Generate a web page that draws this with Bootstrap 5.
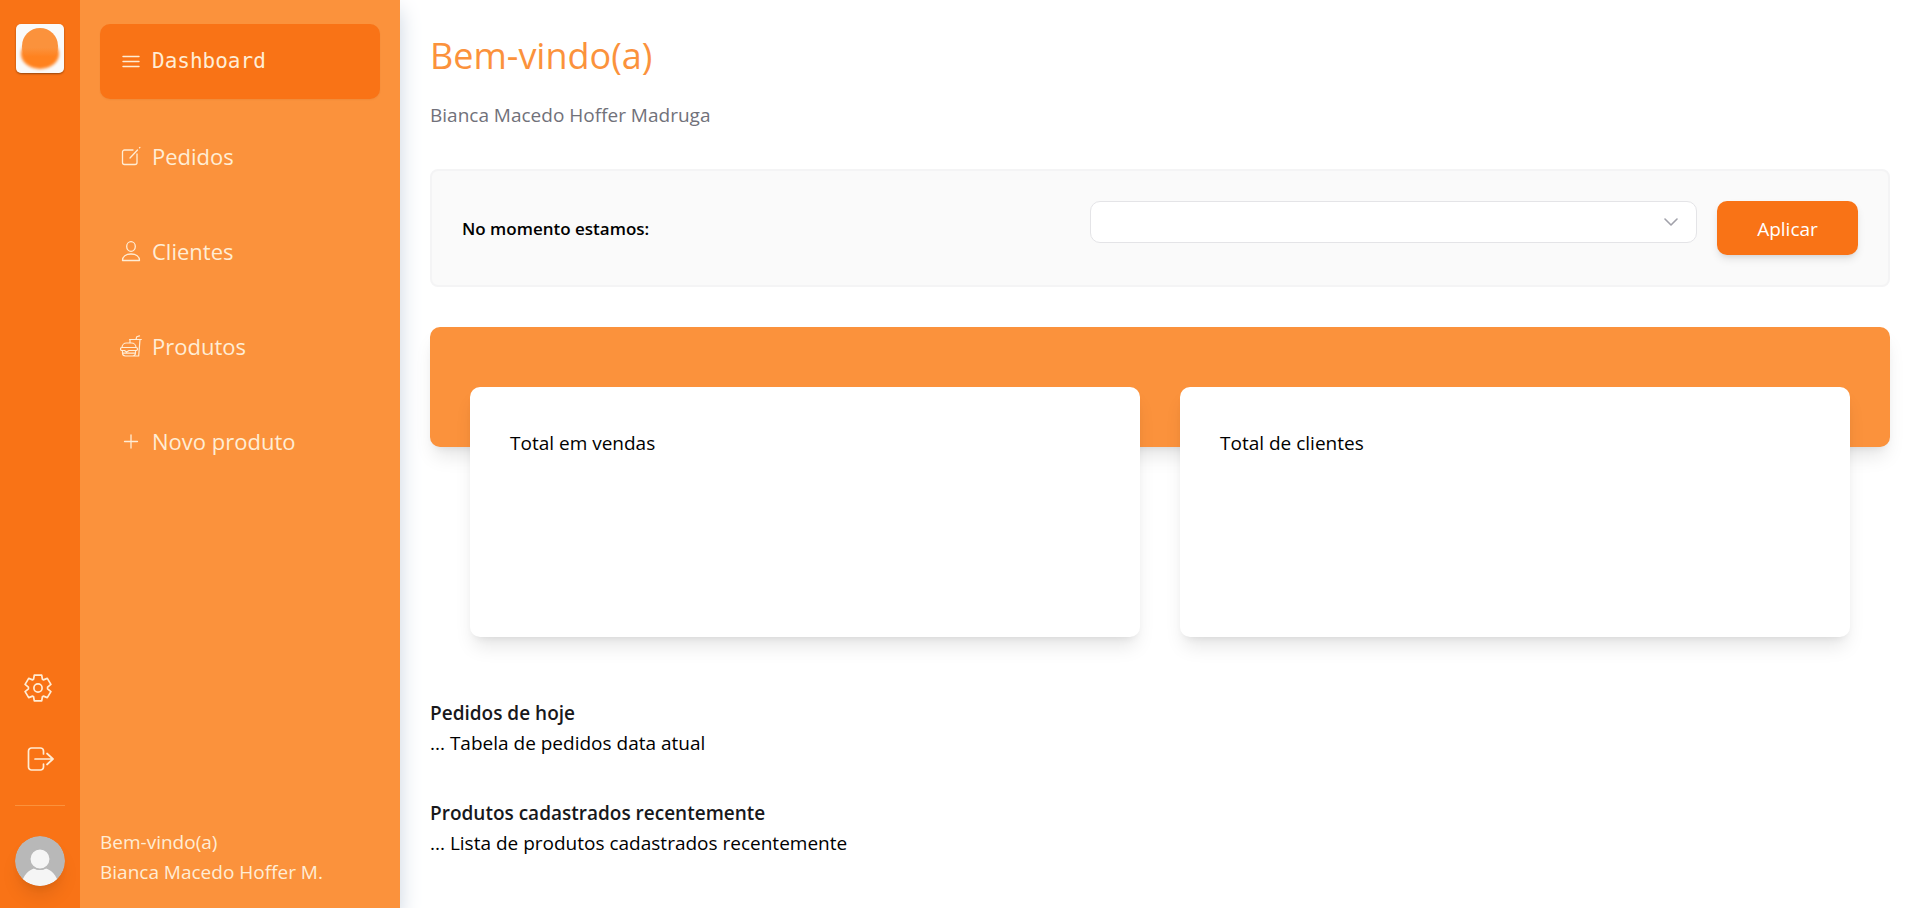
<!DOCTYPE html>
<html lang="pt-BR">
<head>
<meta charset="utf-8">
<meta name="viewport" content="width=device-width, initial-scale=1">
<title>Dashboard</title>
<link href="https://cdn.jsdelivr.net/npm/bootstrap@5.3.0/dist/css/bootstrap.min.css" rel="stylesheet">
<style>
  :root { --brand: #f97316; --brand-soft: #fb923c; --cream: #ffedd5; --shadow-lg: 0 13px 19px -4px rgba(0,0,0,.1), 0 5px 8px -5px rgba(0,0,0,.1); }
  body { font-family: "Open Sans", "Noto Sans", sans-serif; font-size: 19px; line-height: 30px; color: #000; }
  svg { display: block; }
  .line-icon { fill: none; stroke: currentColor; stroke-linecap: round; stroke-linejoin: round; }
  .side-area { box-shadow: 0 10px 20px 0 #cbd5e1; }
  .rail { width: 80px; padding: 24px 15px 22px; background: var(--brand); color: var(--cream); }
  .rail a, .menu a { color: var(--cream); }
  .logo { width: 48px; border-radius: 5px; box-shadow: 0 1px 2px rgba(0,0,0,.4); overflow: hidden; }
  .rail-tools { gap: 43px; }
  .rail-rule { width: 50px; height: 1px; margin: 32px 0 30px; border: 0; opacity: 1; background: var(--brand-soft); }
  .avatar { width: 50px; height: 50px; border-radius: 50%; box-shadow: var(--shadow-lg); }
  .menu { width: 320px; padding: 24px 20px 21px; background: var(--brand-soft); color: var(--cream); }
  .menu .nav { gap: 20px; }
  .menu .nav-link { display: flex; align-items: center; gap: 10px; height: 75px; padding: 0 20px 2px; font-size: 22px; border-radius: 10px; }
  .menu .nav-link.active { background: var(--brand); font-family: "DejaVu Sans Mono", monospace; font-size: 21px; box-shadow: 0 1px 2px rgba(0,0,0,.05); }
  main { padding: 26px 30px; min-width: 0; }
  h1 { font-size: 36px; line-height: 60px; font-weight: 400; color: var(--brand-soft); margin-bottom: 14px; }
  .user-name { color: #71717a; margin-bottom: 39px; }
  .status-box { padding: 30px; border: 2px solid #f4f4f5; border-radius: 8px; background: #fafafa; gap: 20px; margin-bottom: 40px; }
  .status-box .row { --bs-gutter-x: 20px; }
  .status-box label { font-size: 17px; font-weight: 600; line-height: 56px; margin-bottom: -2px; }
  .status-box .form-select { height: 42px; border: 1px solid #e4e4e7; border-radius: 10px; background-position: right 18px center; background-size: 14px 14px;
    background-image: url("data:image/svg+xml,%3csvg xmlns='http://www.w3.org/2000/svg' viewBox='0 0 14 14'%3e%3cpath fill='none' stroke='%23a1a1aa' stroke-width='1.6' stroke-linecap='round' stroke-linejoin='round' d='M1 4l6 6 6-6'/%3e%3c/svg%3e"); }
  .btn-apply { width: 141px; height: 54px; padding: 2px 0 0; border: 0; border-radius: 10px; background: var(--brand); color: #fff; font-size: 19px; box-shadow: 0 5px 8px -1px rgba(0,0,0,.1), 0 3px 5px -3px rgba(0,0,0,.1); }
  .btn-apply:hover { background: #ea580c; color: #fff; }
  .banner { height: 120px; border-radius: 10px; background: var(--brand-soft); box-shadow: var(--shadow-lg); }
  .totals { margin: -60px 40px 61px; gap: 40px; position: relative; }
  .total-card { min-height: 250px; padding: 40px; border-radius: 10px; background: #fff; box-shadow: var(--shadow-lg); }
  .total-card h2 { font-size: 19px; line-height: 32px; font-weight: 400; margin: 0; }
  .list-block + .list-block { margin-top: 40px; }
  .list-block h2 { font-size: 19px; line-height: 30px; font-weight: 600; color: #18181b; margin: 0; }
</style>
</head>
<body>
<div class="d-flex min-vh-100">
  <div class="side-area d-flex flex-shrink-0">
    <div class="rail d-flex flex-column align-items-center justify-content-between">
      <a href="#" class="logo" aria-label="Início">
        <svg width="48" height="49" viewBox="0 0 48 49">
          <defs>
            <filter id="soft" x="-20%" y="-20%" width="140%" height="140%" color-interpolation-filters="sRGB"><feGaussianBlur stdDeviation="1.5"/></filter>
            <linearGradient id="fade" x1="0" y1="0" x2="0" y2="1"><stop offset=".55" stop-color="#fb923c"/><stop offset=".8" stop-color="#ff821f"/></linearGradient>
          </defs>
          <rect width="48" height="49" fill="#fafafa"/>
          <ellipse cx="24" cy="30" rx="19" ry="15" fill="#ff821f" filter="url(#soft)"/>
          <circle cx="24" cy="22" r="18" fill="url(#fade)"/>
        </svg>
      </a>
      <div class="d-flex flex-column align-items-center">
        <div class="rail-tools d-flex flex-column align-items-center">
          <a href="#" aria-label="Configurações" class="me-1">
            <svg class="line-icon" width="28" height="28" viewBox="-14 -14 28 28" stroke-width="1.7"><path d="M-3.7-12.9H3.7L4.4-8.8 5.4-8.1 9.3-9.6 12.9-3.6 9.6-.9V.9L12.9 3.6 9.3 9.6 5.4 8.1 4.4 8.8 3.7 12.9H-3.7L-4.4 8.8-5.4 8.1-9.3 9.6-12.9 3.6-9.6.9V-.9L-12.9-3.6-9.3-9.6-5.4-8.1-4.4-8.8Z"/><circle r="4.1"/></svg>
          </a>
          <a href="#" aria-label="Sair">
            <svg class="line-icon" width="28" height="28" viewBox="0 0 28 28" stroke-width="1.7"><path d="M17.500 9V6a3 3 0 0 0-3-3h-9a3 3 0 0 0-3 3v16a3 3 0 0 0 3 3h9a3 3 0 0 0 3-3v-3M9 14h18M21 8.500l6 5.500-6 5.500"/></svg>
          </a>
        </div>
        <hr class="rail-rule">
        <svg class="avatar" viewBox="0 0 50 50" role="img" aria-label="Bianca Macedo Hoffer M.">
          <defs><clipPath id="round"><circle cx="25" cy="25" r="25"/></clipPath></defs>
          <g clip-path="url(#round)"><rect width="50" height="50" fill="#b8b8b8"/><path d="M5 50C9 38 14 34 19 32.500q6 3 12 0C36 34 41 38 45 50Z" fill="#f5f5f5"/><circle cx="25" cy="23" r="10.200" fill="#f5f5f5" stroke="#b8b8b8" stroke-width="1.500"/></g>
        </svg>
      </div>
    </div>
    <div class="menu d-flex flex-column justify-content-between">
      <nav class="nav flex-column" aria-label="Principal">
        <a class="nav-link active" href="#" aria-current="page">
          <svg class="line-icon" width="22" height="22" viewBox="0 0 22 22" stroke-width="1.4"><path d="M3 6.500h16M3 11.500h16M3 16.500h16"/></svg>Dashboard</a>
        <a class="nav-link" href="#">
          <svg class="line-icon" width="22" height="22" viewBox="0 0 22 22" stroke-width="1.3"><path d="M13 5H4.500a2 2 0 0 0-2 2v10.500a2 2 0 0 0 2 2H15a2 2 0 0 0 2-2V9M10 13l7.500-8M19.500 2.800l.4-.4"/></svg>Pedidos</a>
        <a class="nav-link" href="#">
          <svg class="line-icon" width="22" height="22" viewBox="0 0 22 22" stroke-width="1.3"><ellipse cx="11" cy="6.500" rx="4.300" ry="4.800"/><path d="M2.500 20.500C2.500 16.500 6 14 11 14s8.500 2.500 8.500 6.500Z"/></svg>Clientes</a>
        <a class="nav-link" href="#">
          <svg class="line-icon" width="22" height="22" viewBox="0 0 22 22" stroke-width="1.2"><path d="M2 12.500a4.500 4.500 0 0 1 4.500-4.500h5a4.500 4.500 0 0 1 4.500 4.500ZM2 12.500a1.500 1.500 0 0 0 0 3l2.500 0 2 1.500 2.500-1.500h7a1.500 1.500 0 0 0 0-3M2.500 18.200h13M2.500 15.500v2.500a3 3 0 0 0 3 3h7a3 3 0 0 0 3-3v-2.500M9.500 4.500h11.800M20 4.500l-1.300 16.500H13M10 4.500v3M16 4.500l.7-2.700L19.500.9"/></svg>Produtos</a>
        <a class="nav-link" href="#">
          <svg class="line-icon" width="22" height="22" viewBox="0 0 22 22" stroke-width="1.3"><path d="M4.500 11.500h13M11 5v13"/></svg>Novo produto</a>
      </nav>
      <div>Bem-vindo(a)<br>Bianca Macedo Hoffer M.</div>
    </div>
  </div>
  <main class="flex-grow-1">
    <h1>Bem-vindo(a)</h1>
    <p class="user-name">Bianca Macedo Hoffer Madruga</p>
    <form class="status-box d-flex align-items-start">
      <div class="row flex-grow-1">
        <label for="status" class="col-6">No momento estamos:</label>
        <div class="col-6"><select id="status" class="form-select"><option selected></option><option>Abertos</option><option>Fechados</option></select></div>
      </div>
      <button type="button" class="btn btn-apply flex-shrink-0">Aplicar</button>
    </form>
    <div class="banner"></div>
    <div class="totals d-flex">
      <section class="total-card flex-fill w-50"><h2>Total em vendas</h2></section>
      <section class="total-card flex-fill w-50"><h2>Total de clientes</h2></section>
    </div>
    <section class="list-block"><h2>Pedidos de hoje</h2><div>... Tabela de pedidos data atual</div></section>
    <section class="list-block"><h2>Produtos cadastrados recentemente</h2><div>... Lista de produtos cadastrados recentemente</div></section>
  </main>
</div>
<script src="https://cdn.jsdelivr.net/npm/bootstrap@5.3.0/dist/js/bootstrap.bundle.min.js"></script>
</body>
</html>
